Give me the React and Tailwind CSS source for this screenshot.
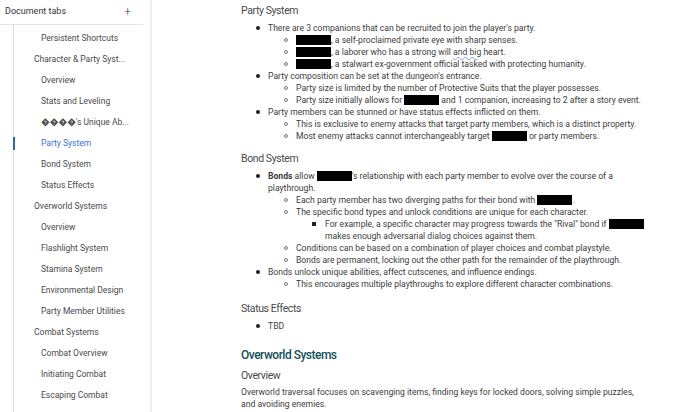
// Google Docs style page with document tabs sidebar

const tabs = [
  { label: "Persistent Shortcuts", level: 2 },
  { label: "Character & Party Syst...", level: 1 },
  { label: "Overview", level: 2 },
  { label: "Stats and Leveling", level: 2 },
  { label: "\uFFFD\uFFFD\uFFFD\uFFFD's Unique Ab...", level: 2 },
  { label: "Party System", level: 2, active: true },
  { label: "Bond System", level: 2 },
  { label: "Status Effects", level: 2 },
  { label: "Overworld Systems", level: 1 },
  { label: "Overview", level: 2 },
  { label: "Flashlight System", level: 2 },
  { label: "Stamina System", level: 2 },
  { label: "Environmental Design", level: 2 },
  { label: "Party Member Utilities", level: 2 },
  { label: "Combat Systems", level: 1 },
  { label: "Combat Overview", level: 2 },
  { label: "Initiating Combat", level: 2 },
  { label: "Escaping Combat", level: 2 },
];

function Redact({ w = 35 }) {
  return (
    <span
      className="inline-block h-[10px] bg-black align-[-2px]"
      style={{ width: w }}
    />
  );
}

function Item({ level = 1, children }) {
  if (level === 1) {
    return (
      <div className="flex items-start pl-[15px]">
        <span className="flex h-[12px] w-[12px] shrink-0 items-center">
          <span className="block h-[3.5px] w-[3.5px] rounded-full bg-[#222]" />
        </span>
        <div className="flex-1">{children}</div>
      </div>
    );
  }
  if (level === 2) {
    return (
      <div className="flex items-start pl-[43px]">
        <span className="flex h-[12px] w-[12px] shrink-0 items-center">
          <span className="block h-[4px] w-[4px] rounded-full border border-[#777]" />
        </span>
        <div className="flex-1">{children}</div>
      </div>
    );
  }
  return (
    <div className="flex items-start pl-[71px]">
      <span className="flex h-[12px] w-[13px] shrink-0 items-center">
        <span className="block h-[3.5px] w-[3.5px] bg-[#222]" />
      </span>
      <div className="flex-1">{children}</div>
    </div>
  );
}

function H3({ children, className = "" }) {
  return (
    <h3 className={"text-[10.5px] leading-[14px] tracking-[-0.4px] text-[#4a4a4a] " + className}>
      {children}
    </h3>
  );
}

export default function App() {
  return (
    <div className="flex h-[412px] w-[680px] overflow-hidden bg-white font-['Roboto',sans-serif]">
      {/* Sidebar */}
      <aside className="w-[152px] shrink-0 border-r-2 border-[#eeeeee]">
        <div className="mr-[7px] flex h-[25px] items-center justify-between border-b border-[#e3e3e3] pl-[5px] pr-[12px]">
          <span className="text-[9px] text-[#333]">Document tabs</span>
          <span className="text-[12px] font-light leading-none text-[#444]">+</span>
        </div>
        <div className="ml-[13px] h-full border-l border-[#dddddd] pt-[3px]">
          {tabs.map((t, i) => (
            <div
              key={i}
              className={
                "relative flex h-[21px] items-center text-[8.5px] " +
                (t.level === 1 ? "pl-[20px] " : "pl-[27px] ") +
                (t.active ? "text-[#3d6fd6]" : "text-[#4a4a4a]")
              }
            >
              {t.active && (
                <span className="absolute left-[-1.5px] top-[4px] h-[13px] w-[2px] bg-[#2f5fce]" />
              )}
              {t.label}
            </div>
          ))}
        </div>
      </aside>

      {/* Document */}
      <main className="flex-1 pl-[89px] pt-[4px]">
        <div className="w-[407px] text-[8.6px] leading-[12px] text-[#3c3c3c]">
          <H3>Party System</H3>
          <div className="mt-[4px]">
            <Item>There are 3 companions that can be recruited to join the player's party.</Item>
            <Item level={2}><Redact />, a self-proclaimed private eye with sharp senses.</Item>
            <Item level={2}>
              <Redact />, a laborer who has a strong will{" "}
              <span className="underline decoration-[#7aa0e8] decoration-wavy decoration-[0.5px]">and big</span> heart.
            </Item>
            <Item level={2}><Redact />, a stalwart ex-government official tasked with protecting humanity.</Item>
            <Item>Party composition can be set at the dungeon's entrance.</Item>
            <Item level={2}>Party size is limited by the number of Protective Suits that the player possesses.</Item>
            <Item level={2}>Party size initially allows for <Redact /> and 1 companion, increasing to 2 after a story event.</Item>
            <Item>Party members can be stunned or have status effects inflicted on them.</Item>
            <Item level={2}>This is exclusive to enemy attacks that target party members, which is a distinct property.</Item>
            <Item level={2}>Most enemy attacks cannot interchangeably target <Redact /> or party members.</Item>
          </div>

          <H3 className="mt-[10px]">Bond System</H3>
          <div className="mt-[4px]">
            <Item>
              <b className="font-bold">Bonds</b> allow <Redact />'s relationship with each party member to evolve over the course of a playthrough.
            </Item>
            <Item level={2}>Each party member has two diverging paths for their bond with <Redact />.</Item>
            <Item level={2}>The specific bond types and unlock conditions are unique for each character.</Item>
            <Item level={3}>
              For example, a specific character may progress towards the "Rival" bond if <Redact /> makes enough adversarial dialog choices against them.
            </Item>
            <Item level={2}>Conditions can be based on a combination of player choices and combat playstyle.</Item>
            <Item level={2}>Bonds are permanent, locking out the other path for the remainder of the playthrough.</Item>
            <Item>Bonds unlock unique abilities, affect cutscenes, and influence endings.</Item>
            <Item level={2}>This encourages multiple playthroughs to explore different character combinations.</Item>
          </div>

          <H3 className="mt-[12px]">Status Effects</H3>
          <div className="mt-[4px]">
            <Item>TBD</Item>
          </div>

          <h2 className="mt-[15px] text-[12px] font-medium leading-[16px] tracking-[-0.5px] text-[#134f5c]">
            Overworld Systems
          </h2>
          <H3 className="mt-[6px]">Overview</H3>
          <p className="mt-[3px] w-[400px]">
            Overworld traversal focuses on scavenging items, finding keys for locked doors, solving simple puzzles, and avoiding enemies.
          </p>
        </div>
      </main>
    </div>
  );
}
